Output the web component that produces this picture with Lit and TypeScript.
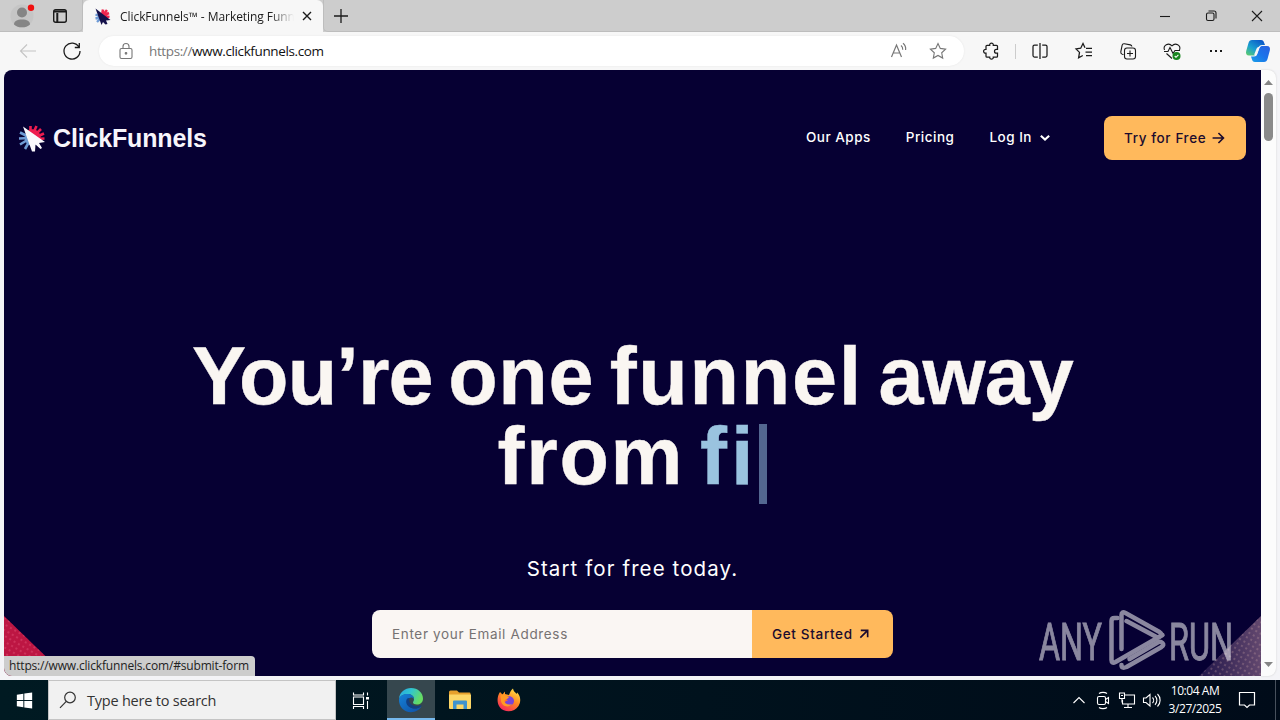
import { LitElement, html, css, svg } from 'lit';
import { customElement, property } from 'lit/decorators.js';

const icons: Record<string, any> = {
  profile: svg`<circle cx="12" cy="12" r="11.5" fill="#bfbfbf" opacity=".55"/><circle cx="12" cy="8.5" r="5" fill="#858585"/><path d="M4 20.500c0-3.500 3-5 8-5s8 1.500 8 5c-2 2.200-5 2.800-8 2.800s-6-.6-8-2.800z" fill="#858585"/><circle cx="21" cy="3.700" r="3.200" fill="#f01010"/>`,
  workspace: svg`<rect x="5.700" y="5.700" width="12.600" height="12.600" rx="2" stroke-width="1.400"/><path d="M6 7.500h12M9.300 9v9" stroke-width="2"/>`,
  favicon: svg`<path d="M12 12L13 5.500M12 12l5-6M12 12l7-3M13 12l6.500 1" stroke="#f0254f" stroke-width="2.600"/><path d="M12 13L5.500 10.500M12 13l-6.500 1.500M12 13l-5 5" stroke="#6f9bd6" stroke-width="2.400"/><path d="M5.500 4.500l15 11.500-4.500.5 1.500 3.500-2 .5-2.500-2.500-1.500 3z" fill="#14104a" stroke="none"/>`,
  close: svg`<path d="M8 8l8 8M16 8l-8 8" stroke-width="1.400"/>`,
  plus: svg`<path d="M12 5v14M5 12h14" stroke-width="1.300"/>`,
  min: svg`<path d="M7 12.500h10"/>`,
  restore: svg`<rect x="7.500" y="9" width="7.500" height="7.500" rx="1.500"/><path d="M9.500 7h5.500a2 2 0 0 1 2 2v5.500"/>`,
  quit: svg`<path d="M7 7l10 10M17 7L7 17"/>`,
  back: svg`<path d="M20 12H5M11 5.500L4.500 12l6.500 6.500"/>`,
  reload: svg`<path d="M19 8.200A8 8 0 1 0 20 12M19.300 4v4.500h-4.500" stroke-width="1.300"/>`,
  lock: svg`<rect x="6" y="9.500" width="12" height="10" rx="1.500"/><path d="M9 9.500V7.500a3 3 0 0 1 6 0v2"/><circle cx="12" cy="14.300" r=".8" fill="currentColor"/>`,
  read: svg`<path d="M4.500 18l5-12 5 12M6.300 14h6.500M14 6.500c1.300 1 1.900 2.500 1.700 4.200M16 4.300c2 1.600 3 3.900 2.600 6.700" stroke-width="1.200"/>`,
  star: svg`<path d="M12 4.500l2.300 4.900 5.300.7-3.900 3.700 1 5.300-4.700-2.600-4.700 2.600 1-5.300-3.900-3.700 5.300-.7z"/>`,
  puzzle: svg`<path d="M8 6.300h2.700c-.4-2.900 4-2.900 3.600 0h3.200q1 0 1 1v3h-1.200c-2.400 0-2.400 3.900 0 3.900h1.200v3q0 1-1 1h-3.200c.3 2.600-3.900 2.600-3.600 0H8q-1 0-1-1v-3c-3.200.4-3.200-4.200 0-3.900v-3q0-1 1-1z" stroke-width="1.250"/>`,
  split: svg`<path d="M9.800 6H6.500a1.500 1.500 0 0 0-1.500 1.500v9A1.500 1.500 0 0 0 6.500 18h3.300M14.200 6h3.300A1.500 1.500 0 0 1 19 7.500v9a1.500 1.500 0 0 1-1.500 1.500h-3.300M12 4v16" stroke-width="1.250"/>`,
  favs: svg`<path d="M13 8.800L11 4.500 8.700 9.200l-4.700.7 3.500 3.500-.9 5.400 4.200-2.300M14 9.300h6M13.500 13h6.500M14 16.700h6" stroke-width="1.250"/>`,
  collect: svg`<path d="M7.500 15.500l-1.300-.3a2 2 0 0 1-1.400-2.300l1.300-6.500a2 2 0 0 1 2.300-1.600l6 1.100a2 2 0 0 1 1.500 1.600"/><rect x="8.500" y="9" width="11" height="11" rx="2.500"/><path d="M14 11.500v6M11 14.500h6"/>`,
  health: svg`<path d="M4.500 11C2.700 6.500 8.500 3 12 6.800 15.500 3 21.300 6.500 19.500 11M4 12.500h4l2-4 3 6 2-3h5M6.500 14.500L12 19.500"/><circle cx="16.500" cy="17" r="4" fill="#16851d" stroke="none"/><path d="M14.700 17l1.300 1.300 2.400-2.500" stroke="#fff"/>`,
  dots: svg`<path d="M6 11h2v2H6zM11 11h2v2h-2zM16 11h2v2h-2z" fill="currentColor" stroke="none"/>`,
  down: svg`<path d="M7 10.500l5 4.500 5-4.500" stroke-width="2.600"/>`,
  right: svg`<path d="M5.500 12h12.500M12.500 6l6 6-6 6" stroke-width="2"/>`,
  upright: svg`<path d="M8 16l8-8M8.500 8H16v7.500" stroke-width="1.800"/>`,
  windows: svg`<path d="M4 6l6.800-1v6.500H4zM11.800 4.800L20 3.700v7.800h-8.200zM4 12.500h6.800V19L4 18zM11.800 12.500H20v7.800l-8.200-1.100z" fill="#fff" stroke="none"/>`,
  search: svg`<circle cx="14" cy="9.500" r="5.300" stroke-width="1.200"/><path d="M10.300 13.300L4 19.800" stroke-width="1.200"/>`,
  taskview: svg`<path d="M4.500 9h10v7.500h-10zM4.500 4.500V7h10V4.500M4.500 21v-2.500h10V21M18.500 4.500v3M18.500 13v8"/><path d="M17 9h3v2.500h-3z" fill="#fff" stroke="none"/>`,
  chevron: svg`<path d="M6.500 15l5.500-5.500 5.500 5.500"/>`,
  meet: svg`<rect x="6.500" y="8.500" width="8" height="8" rx="1.500"/><path d="M14.500 11.500l3-2v6l-3-2M8 5.500c2-1.500 6-1.500 8 0M8 19.500c2 1.500 6 1.500 8 0"/>`,
  network: svg`<path d="M9.500 7H19.500v9H7.500v-4M9 19.500h8M13 16v3.500M4.500 5h5v5.500h-5zM7 10.500v4"/><path d="M6 7.500h2"/>`,
  sound: svg`<path d="M4.500 10v4.500H7l4 3.500V6.500L7 10zM13.500 9.500c1.500 1.500 1.500 4 0 5.500M16 7.800c2.500 2.500 2.500 6.500 0 9M18.500 6c3.500 3.500 3.500 9 0 12.500"/>`,
  notice: svg`<path d="M4.500 4.500h15v12.500h-5L12 19.500 9.500 17h-5z" stroke-width="1.200"/>`,
};

@customElement('ui-icon')
export class UiIcon extends LitElement {
  @property() name = '';
  @property({ type: Number }) size = 24;

  static styles = css`
    :host {
      display: block;
      flex: none;
    }
    .icon {
      display: block;
      overflow: visible;
      fill: none;
      stroke: currentColor;
      stroke-width: 1.1;
    }
    .profile {
      stroke: none;
    }
  `;

  render() {
    return html`<svg class="icon ${this.name}" width=${this.size} height=${this.size} viewBox="0 0 24 24">${icons[this.name]}</svg>`;
  }
}

@customElement('browser-chrome')
export class BrowserChrome extends LitElement {
  static styles = css`
    :host {
      display: block;
      font-family: 'Open Sans', 'Noto Sans', sans-serif;
      color: #1b1b1b;
    }
    .tabs {
      display: flex;
      height: 32px;
      background: #cdcdcd;
    }
    .left {
      display: flex;
      align-items: center;
      width: 83px;
      box-sizing: border-box;
      padding-left: 10px;
      gap: 14px;
      border-right: 1px solid #bdbdbd;
      border-bottom: 1px solid #bdbdbd;
      border-bottom-right-radius: 5px;
    }
    .tab {
      display: flex;
      align-items: center;
      width: 240px;
      box-sizing: border-box;
      padding: 0 4px 0 7px;
      background: #f7f7f7;
      border-radius: 6px 6px 0 0;
    }
    .title {
      width: 174px;
      margin-left: 6px;
      font-size: 12px;
      letter-spacing: -0.06px;
      white-space: nowrap;
      overflow: hidden;
      mask-image: linear-gradient(90deg, #000 86%, transparent);
    }
    .tab ui-icon:last-child {
      margin-left: 1px;
    }
    .rest {
      display: flex;
      align-items: center;
      justify-content: space-between;
      flex: 1;
      padding: 0 11px 0 5px;
      border-left: 1px solid #bdbdbd;
      border-bottom: 1px solid #bdbdbd;
      border-bottom-left-radius: 5px;
    }
    .window {
      display: flex;
      gap: 22px;
    }
    .bar {
      display: flex;
      align-items: center;
      height: 38px;
      box-sizing: border-box;
      padding: 0 10px 0 16px;
      background: #f7f7f7;
    }
    .back {
      color: #c4c4c4;
    }
    .reload {
      margin: 0 15px 0 20px;
    }
    .address {
      display: flex;
      flex: none;
      align-items: center;
      width: 865px;
      height: 30px;
      box-sizing: border-box;
      padding: 0 14px 0 15px;
      border-radius: 15px;
      background: #fff;
      color: #777;
      box-shadow: 0 0 2px #e4e4e4;
    }
    .url {
      flex: 1;
      margin-left: 11px;
      font-size: 13.5px;
      letter-spacing: -0.38px;
    }
    .host {
      color: #111;
    }
    .address ui-icon + ui-icon {
      margin-left: 15px;
    }
    .tools {
      display: flex;
      align-items: center;
      gap: 20px;
      margin-left: 15px;
    }
    .rule {
      width: 1px;
      height: 15px;
      margin: 0 -8px;
      background: #ccc;
    }
    .copilot {
      display: block;
      margin-left: -3px;
    }
  `;

  render() {
    return html`
      <div class="tabs">
        <div class="left">
          <ui-icon name="profile"></ui-icon>
          <ui-icon name="workspace"></ui-icon>
        </div>
        <div class="tab">
          <ui-icon name="favicon"></ui-icon>
          <div class="title">ClickFunnels™ - Marketing Funnels</div>
          <ui-icon name="close"></ui-icon>
        </div>
        <div class="rest">
          <ui-icon name="plus"></ui-icon>
          <div class="window">
            <ui-icon name="min"></ui-icon>
            <ui-icon name="restore"></ui-icon>
            <ui-icon name="quit"></ui-icon>
          </div>
        </div>
      </div>
      <div class="bar">
        <ui-icon class="back" name="back"></ui-icon>
        <ui-icon class="reload" name="reload"></ui-icon>
        <div class="address">
          <ui-icon name="lock"></ui-icon>
          <div class="url">https://<span class="host">www.clickfunnels.com</span></div>
          <ui-icon name="read"></ui-icon>
          <ui-icon name="star"></ui-icon>
        </div>
        <div class="tools">
          <ui-icon name="puzzle"></ui-icon>
          <div class="rule"></div>
          <ui-icon name="split"></ui-icon>
          <ui-icon name="favs"></ui-icon>
          <ui-icon name="collect"></ui-icon>
          <ui-icon name="health"></ui-icon>
          <ui-icon name="dots"></ui-icon>
          <svg class="copilot" width="26" height="24" viewBox="0 0 26 24">
            <defs>
              <linearGradient id="ca" x1="0" y1="1" x2=".8" y2="0">
                <stop offset="0" stop-color="#63d063" /><stop offset=".45" stop-color="#1aa0d0" /><stop offset="1" stop-color="#0a55c8" />
              </linearGradient>
              <linearGradient id="cb" x1="0" y1="1" x2="1" y2="0">
                <stop offset="0" stop-color="#18a0e8" /><stop offset=".5" stop-color="#1c74ea" /><stop offset="1" stop-color="#2a60e0" />
              </linearGradient>
            </defs>
            <path d="M7 1h9c2 0 2.500 1 3 2.500L20 6h-3c-2 0-2.800 1-3.500 3l-1.800 5c-.7 2-1.700 2.500-3.500 2.500H4C1.500 16.500.5 14.500 1.200 12L3.500 4C4 2 5.200 1 7 1z" fill="url(#ca)" />
            <path d="M19 23h-9c-2 0-2.500-1-3-2.500L6 17.500h3c2 0 2.800-1 3.500-3l1.800-5c.7-2 1.700-2.500 3.500-2.500H22c2.500 0 3.500 2 2.800 4.500L22.500 20c-.5 2-1.700 3-3.500 3z" fill="url(#cb)" />
            <path d="M16.300 7.500c-1.300.2-2 1-2.500 2.500l-1.800 5c-.4 1.200-1 1.800-1.800 1.800-.8 0-1-.8-.7-2l1.800-4.500c.8-2 2-3 5-2.800z" fill="#f7f7f7" />
          </svg>
        </div>
      </div>
    `;
  }
}

@customElement('funnel-page')
export class FunnelPage extends LitElement {
  static styles = css`
    :host {
      display: block;
      position: relative;
      width: 1257px;
      height: 606px;
      overflow: hidden;
      background: #060033;
      color: #fff;
      font-family: Inter, sans-serif;
      border-radius: 8px 0 0 8px;
    }
    .header {
      display: flex;
      align-items: center;
      height: 44px;
      padding: 46px 15px 0 14px;
    }
    .brand {
      display: flex;
      align-items: center;
      gap: 7px;
      flex: 1;
      font-family: 'Liberation Sans', sans-serif;
      font-size: 25px;
      font-weight: 700;
      letter-spacing: -0.15px;
      color: #f7f5fb;
    }
    .mark {
      display: block;
    }
    .nav {
      display: flex;
      align-items: center;
      gap: 35px;
      padding-bottom: 2px;
      font-size: 13.5px;
      font-weight: 500;
      letter-spacing: 0.5px;
    }
    .login {
      display: flex;
      align-items: center;
      gap: 3px;
    }
    .login ui-icon {
      margin-right: -3px;
    }
    .cta {
      display: flex;
      align-items: center;
      gap: 2px;
      width: 142px;
      height: 44px;
      box-sizing: border-box;
      margin-left: 52px;
      padding-left: 20px;
      border-radius: 8px;
      background: #ffb95c;
      color: #1b0b2e;
      font-size: 13.5px;
      font-weight: 500;
      letter-spacing: 0.6px;
    }
    .headline {
      margin: 176px 0 0;
      font-family: 'Liberation Sans', Arial, sans-serif;
      font-size: 81px;
      line-height: 80px;
      font-weight: 700;
      letter-spacing: -0.9px;
      word-spacing: -6px;
      text-align: center;
      color: #faf6f2;
      -webkit-text-stroke: 0.4px;
    }
    .open {
      letter-spacing: 0.6px;
    }
    .wide {
      letter-spacing: 1.7px;
    }
    .typed {
      color: #9ac3df;
      letter-spacing: 4px;
    }
    .caret {
      display: inline-block;
      width: 8px;
      height: 80px;
      margin: 0 0 -20px 2px;
      background: #536791;
    }
    .sub {
      margin-top: 58px;
      font-size: 20.5px;
      line-height: 30px;
      letter-spacing: 1.1px;
      text-align: center;
    }
    .form {
      display: flex;
      width: 521px;
      height: 48px;
      margin: 26px 0 0 368px;
      border-radius: 8px;
      overflow: hidden;
      font-size: 13.5px;
      letter-spacing: 0.66px;
    }
    .email {
      display: flex;
      align-items: center;
      width: 380px;
      box-sizing: border-box;
      padding-left: 20px;
      background: #faf6f3;
      color: #767272;
    }
    .submit {
      display: flex;
      align-items: center;
      flex: 1;
      padding-left: 20px;
      background: #ffb95c;
      color: #1b0b2e;
      font-weight: 500;
    }
    .corners {
      position: absolute;
      left: 0;
      bottom: 0;
    }
    .watermark {
      position: absolute;
      right: 26px;
      bottom: 4px;
      overflow: visible;
    }
    .word {
      font-family: Roboto, sans-serif;
      font-size: 52px;
      fill: #fff;
      stroke: #fff;
      stroke-width: 1px;
    }
  `;

  render() {
    return html`
      <div class="header">
        <div class="brand">
          <svg class="mark" width="28" height="28" viewBox="0 0 28 28">
            <circle cx="14" cy="14" r="7.500" fill="#6f9bd6" />
            <path d="M8 8a8.500 8.500 0 0 1 14.500 8z" fill="#ef1c4f" />
            <path d="M12.500 12V2M14 12l4.500-10M15 13l8-8M16 14l10-4.500M17 15l9.500-.5" fill="none" stroke="#ef1c4f" stroke-width="2.600" />
            <path d="M11 13L2 8.500M11 14l-10 .5M11 15l-9 5.500M12 16L7 25" fill="none" stroke="#6f9bd6" stroke-width="2.600" />
            <path d="M5 2.500L27 18l-6 1 3 5-1.500 1-5-4.500-.5 7h-3z" fill="#faf8fc" />
          </svg>
          <span>ClickFunnels</span>
        </div>
        <div class="nav">
          <span>Our Apps</span>
          <span>Pricing</span>
          <span class="login">Log In <ui-icon name="down" size="20"></ui-icon></span>
        </div>
        <div class="cta">Try for Free<ui-icon name="right" size="20"></ui-icon></div>
      </div>
      <h1 class="headline">
        You’re <span class="open">one</span> <span class="wide">funnel</span> away<br />
        <span class="wide">from</span> <span class="typed">fi</span><span class="caret"></span>
      </h1>
      <div class="sub">Start for free today.</div>
      <div class="form">
        <div class="email">Enter your Email Address</div>
        <div class="submit">Get Started <ui-icon name="upright" size="22"></ui-icon></div>
      </div>
      <svg class="corners" width="1257" height="60" viewBox="0 0 1257 60">
        <defs>
          <pattern id="dots" width="5" height="5" patternUnits="userSpaceOnUse" patternTransform="rotate(30)">
            <circle cx="2" cy="2" r=".9" fill="#ef6c8c" opacity=".45" />
          </pattern>
          <linearGradient id="fade" x1="0" y1="0" x2="1" y2="0">
            <stop offset="0" stop-color="#1f1448" /><stop offset="1" stop-color="#63486f" />
          </linearGradient>
          <pattern id="pale" width="5" height="5" patternUnits="userSpaceOnUse" patternTransform="rotate(30)">
            <circle cx="2" cy="2" r=".9" fill="#d5a9a8" opacity=".4" />
          </pattern>
        </defs>
        <path d="M0 0L62 60H0z" fill="#bd1643" />
        <path d="M0 0L62 60H0z" fill="url(#dots)" />
        <path d="M1257 0L1195 60H1257z" fill="url(#fade)" />
        <path d="M1257 0L1195 60H1257z" fill="url(#pale)" />
      </svg>
      <svg class="watermark" width="194" height="64" viewBox="0 0 194 64" opacity=".53">
        <text class="word" x="-2" y="51.500" textLength="63" lengthAdjust="spacingAndGlyphs">ANY</text>
        <text class="word" x="128" y="51.500" textLength="64" lengthAdjust="spacingAndGlyphs">RUN</text>
        <g transform="translate(-3.500 0)" fill="none" stroke="#fff" stroke-width="4.500" stroke-linejoin="round" stroke-linecap="round">
          <path d="M80 10h-3q-3 0-3 3v39q0 4 4 2l47-27" />
          <path d="M84 41V7q0-4 4-2l34 19q3 2 1 4t-4 1L89 13" />
          <path d="M84 57q0 4 5 2l35-20q3-2 1-4t-4-1L92 51" />
        </g>
      </svg>
    `;
  }
}

@customElement('task-bar')
export class TaskBar extends LitElement {
  static styles = css`
    :host {
      display: flex;
      height: 40px;
      background: linear-gradient(90deg, #001a22, #00121d 55%, #000b19);
      color: #fff;
      font-family: 'Open Sans', 'Noto Sans', sans-serif;
    }
    .start,
    .app {
      display: flex;
      align-items: center;
      justify-content: center;
      width: 48px;
    }
    .app {
      width: 49px;
    }
    .edge {
      width: 48px;
      box-sizing: border-box;
      background: #36474e;
      border-bottom: 2px solid #76b9ed;
      padding-top: 2px;
    }
    .search {
      display: flex;
      align-items: center;
      gap: 7px;
      width: 288px;
      box-sizing: border-box;
      padding-left: 7px;
      border: 1px solid #c4c4c4;
      background: #f1f1f1;
      color: #333;
      font-size: 14.5px;
      letter-spacing: -0.22px;
    }
    .gap {
      width: 2px;
    }
    .tray {
      display: flex;
      align-items: center;
      margin-left: auto;
      padding-right: 4px;
    }
    .clock {
      flex: none;
      width: 64px;
      margin-right: 8px;
      font-size: 12px;
      line-height: 18px;
      letter-spacing: -0.45px;
      text-align: center;
    }
    .peek {
      width: 1px;
      height: 40px;
      margin-left: 16px;
      background: #47505c;
    }
  `;

  render() {
    return html`
      <div class="start"><ui-icon name="windows" size="23"></ui-icon></div>
      <div class="search"><ui-icon name="search"></ui-icon>Type here to search</div>
      <div class="app"><ui-icon name="taskview"></ui-icon></div>
      <div class="gap"></div>
      <div class="app edge">
        <svg width="26" height="26" viewBox="0 0 26 26">
          <defs>
            <linearGradient id="ea" x1="0" y1="0" x2="1" y2=".4">
              <stop offset="0" stop-color="#27a5e2" /><stop offset=".5" stop-color="#31c5cf" /><stop offset="1" stop-color="#66dc62" />
            </linearGradient>
            <linearGradient id="eb" x1="0" y1="0" x2="1" y2="1">
              <stop offset="0" stop-color="#1581d8" /><stop offset="1" stop-color="#0f4fa3" />
            </linearGradient>
          </defs>
          <path d="M1 12C1.500 5 7 1 13 1c7 0 12 5 12 10.500 0 4-3 6-6 6-2.500 0-4-1-4-2 0-1 1-1.500 1-3.500C16 9 13 7 9.500 7 5 7 2 9.500 1 12z" fill="url(#ea)" />
          <path d="M1 12C1.800 9 5 7 9.500 7 13 7 16 9 16 12c-1-1.500-3-2-4.500-1C8 13 9 20 14.500 21.300c3 .7 6 0 9-2.300-2 4-6 6.200-10.500 6.200C6 25.200.5 19.500 1 12z" fill="url(#eb)" />
          <path d="M9.300 11.500C7 14 8 20 14.500 21.300c3 .7 6 0 8.800-2.300.4-.4.100-.9-.4-.7-6.400 2.500-11.900-.8-11.800-5.500 0-1 .4-1.500.4-1.800-.8-.2-1.600 0-2.200.5z" fill="#123f83" />
        </svg>
      </div>
      <div class="app">
        <svg width="24" height="22" viewBox="0 0 24 22">
          <path d="M1 3q0-1.500 1.500-1.500H9l2 2h10.500q1 0 1 1V7H1z" fill="#e6a02c" />
          <path d="M1 5.500h22V19q0 1-1 1H2q-1 0-1-1z" fill="#fcd667" />
          <path d="M5 20v-7.500q0-1 1-1h12q1 0 1 1V20h-3.500v-4.500h-7V20z" fill="#3f93cf" />
        </svg>
      </div>
      <div class="app">
        <svg width="24" height="24" viewBox="0 0 24 24">
          <defs>
            <linearGradient id="fa" x1=".8" y1="0" x2=".2" y2="1">
              <stop offset="0" stop-color="#ffe548" /><stop offset=".45" stop-color="#ff8a22" /><stop offset="1" stop-color="#f5205f" />
            </linearGradient>
          </defs>
          <path d="M3 4l2.500 2.500L8 3.500V6l4 1c1-3 2-5 4-6.500.2 2.500 2.500 4 3.500 5.500l.7-1.500C24 8.500 24 14 21.500 18c-4 6.500-14 7-18.500 1.500C-.5 15 0 8.500 3 4z" fill="url(#fa)" />
          <path d="M8 9.500c4-3 9.500-.5 9 4-.4 4-5.500 5.500-8.500 2.500C6.500 14 9 13 11 12.500 9.500 11.500 8.500 10.500 8 9.500z" fill="#7845d8" />
          <path d="M3.500 7c2-1 4.500-.5 5.500.7L12 9c-1 2.500-4 1.500-4.500 4 0 3 4 4.500 7.500 3-3 4-10 3-11-3z" fill="#ff9a24" />
        </svg>
      </div>
      <div class="tray">
        <ui-icon name="chevron"></ui-icon>
        <ui-icon name="meet"></ui-icon>
        <ui-icon name="network"></ui-icon>
        <ui-icon name="sound"></ui-icon>
        <div class="clock">10:04 AM<br />3/27/2025</div>
        <ui-icon name="notice"></ui-icon>
        <div class="peek"></div>
      </div>
    `;
  }
}

@customElement('app-root')
export class AppRoot extends LitElement {
  static styles = css`
    :host {
      display: block;
      position: relative;
      width: 1280px;
      height: 720px;
      overflow: hidden;
      background: #f4f4f7;
    }
    .view {
      display: flex;
      height: 606px;
      padding: 0 3px 4px 4px;
    }
    .scroll {
      display: flex;
      flex-direction: column;
      align-items: center;
      width: 15px;
      box-sizing: border-box;
      padding: 10px 0 9px;
      background: #fcfcfc;
      border-radius: 0 8px 8px 0;
      box-shadow: 0 0 2px #ccc;
    }
    .thumb {
      width: 9px;
      height: 48px;
      margin: 8px 0 auto;
      border-radius: 5px;
      background: #8a8a8a;
    }
    .status {
      position: absolute;
      left: 4px;
      top: 656px;
      width: 251px;
      height: 20px;
      box-sizing: border-box;
      padding-left: 5px;
      border-radius: 0 4px 0 8px;
      background: #cdcdcd;
      color: #222;
      font: 12px/20px 'Open Sans', 'Noto Sans', sans-serif;
      letter-spacing: -0.17px;
      white-space: nowrap;
    }
  `;

  render() {
    return html`
      <browser-chrome></browser-chrome>
      <div class="view">
        <funnel-page></funnel-page>
        <div class="scroll">
          <svg width="9" height="5" viewBox="0 0 9 5"><path d="M0 5L4.500 0 9 5z" fill="#858585" /></svg>
          <div class="thumb"></div>
          <svg width="9" height="5" viewBox="0 0 9 5"><path d="M0 0L4.500 5 9 0z" fill="#858585" /></svg>
        </div>
      </div>
      <div class="status">https://www.clickfunnels.com/#submit-form</div>
      <task-bar></task-bar>
    `;
  }
}
